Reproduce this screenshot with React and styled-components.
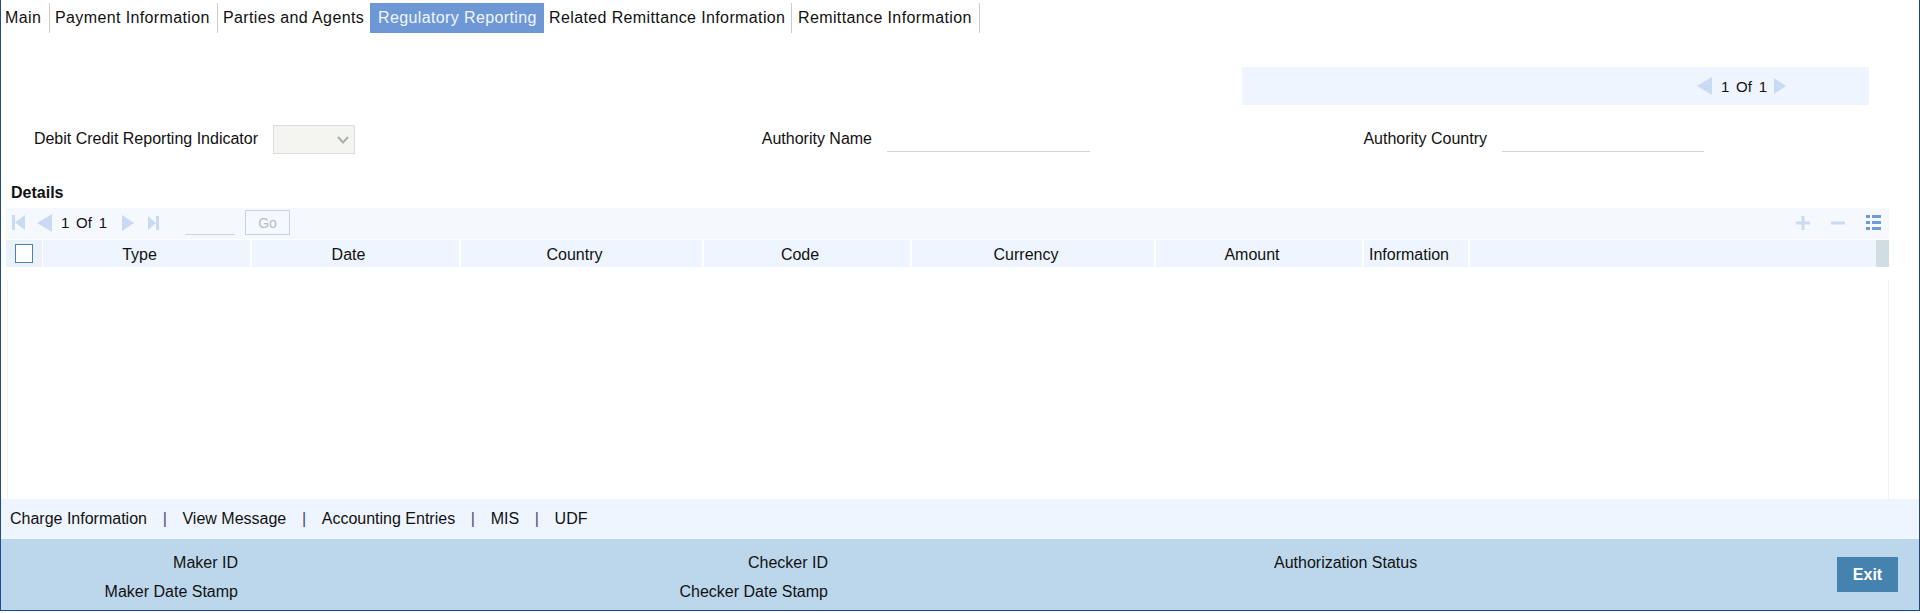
import React from "react";
import styled, { createGlobalStyle } from "styled-components";

const GlobalStyle = createGlobalStyle`
  html, body {
    margin: 0;
    padding: 0;
    background: #fff;
  }
  body {
    font-family: "Liberation Sans", Arial, sans-serif;
    font-size: 16px;
    color: #111;
  }
`;

const Frame = styled("div")`
  box-sizing: border-box;
  width: 1920px;
  height: 611px;
  display: flex;
  flex-direction: column;
  border-left: 1px solid #1f4a8c;
  border-right: 1px solid #1f4a6c;
  border-bottom: 1px solid #1f4a8c;
`;

const TabBar = styled("div")`
  display: flex;
  height: 30px;
  margin-top: 3px;
`;

const Tab = styled("div")`
  box-sizing: border-box;
  width: ${(props) => props.$width}px;
  display: flex;
  align-items: center;
  padding-left: ${(props) => props.$pad}px;
  letter-spacing: 0.38px;
  white-space: nowrap;
  color: ${(props) => (props.$active ? "#f2f6fc" : "#111")};
  background: ${(props) => (props.$active ? "#6d98d5" : "transparent")};
  border-right: ${(props) => (props.$line ? "1px solid #ccc" : "none")};
`;

const PagerBox = styled("div")`
  display: flex;
  align-items: center;
  width: 627px;
  height: 38px;
  margin: 34px 0 0 1241px;
  padding-left: 455px;
  box-sizing: border-box;
  background: #eef5fe;
`;

const PagerText = styled("span")`
  font-size: 15px;
  word-spacing: 2.6px;
  margin: ${(props) => props.$margin};
  white-space: nowrap;
`;

const FormRow = styled("div")`
  display: flex;
  height: 29px;
  margin-top: 20px;
`;

const FieldLabel = styled("label")`
  width: ${(props) => props.$width}px;
  margin-right: 15px;
  text-align: right;
  line-height: 27px;
  white-space: nowrap;
`;

const SelectBox = styled("div")`
  box-sizing: border-box;
  width: 82px;
  height: 29px;
  display: flex;
  align-items: center;
  justify-content: flex-end;
  padding-right: 5px;
  background: #f4f4f1;
  border: 1px solid #dcdcdc;
`;

const UnderlineInput = styled("div")`
  box-sizing: border-box;
  width: ${(props) => props.$width}px;
  height: ${(props) => props.$height}px;
  border-bottom: 1px solid #d4d4d4;
  margin-left: ${(props) => props.$left || 0}px;
`;

const SectionTitle = styled("div")`
  margin: 30px 0 0 10px;
  height: 24px;
  line-height: 18px;
  font-weight: bold;
`;

const Toolbar = styled("div")`
  display: flex;
  align-items: center;
  box-sizing: border-box;
  height: 31px;
  margin: 0 30px 0 5px;
  padding: 0 0 2px 6px;
  background: #f5f9fe;
`;

const ToolIcon = styled("svg")`
  display: block;
  flex: none;
  margin-left: ${(props) => props.$left || 0}px;
`;

const GoButton = styled("div")`
  box-sizing: border-box;
  width: 45px;
  height: 25px;
  margin-left: 10px;
  border: 1px solid #c9d3de;
  color: #b8bcc2;
  font-size: 14px;
  line-height: 25px;
  text-align: center;
`;

const ToolActions = styled("div")`
  display: flex;
  align-items: center;
  margin-left: auto;
  padding-right: 8px;
`;

const HeaderRow = styled("div")`
  display: flex;
  height: 27px;
  margin: 1px 30px 0 5px;
  background: #eef5fe;
`;

const CheckCell = styled("div")`
  box-sizing: border-box;
  width: 37px;
  display: flex;
  align-items: center;
  padding-left: 9px;
  background: #ebf1f8;
  border-right: 1px solid #fff;
`;

const CheckBox = styled("div")`
  box-sizing: border-box;
  width: 18px;
  height: 19px;
  background: #fff;
  border: 1px solid #4a82ae;
`;

const HeadCell = styled("div")`
  box-sizing: border-box;
  width: ${(props) => props.$width}px;
  padding: 1px 14px 0 0;
  line-height: 27px;
  text-align: center;
  white-space: nowrap;
  border-right: 2px solid #fff;
`;

const HeadFill = styled("div")`
  flex: 1;
`;

const ScrollCell = styled("div")`
  width: 13px;
  background: #d0dde2;
`;

const GridBody = styled("div")`
  flex: 1;
  margin: 13px 30px 0 6px;
  border-left: 1px solid #f1f1f1;
  border-right: 1px solid #f1f1f1;
`;

const LinkStrip = styled("div")`
  display: flex;
  align-items: center;
  height: 40px;
  padding-left: 9px;
  background: #eef5fe;
`;

const LinkItem = styled("span")`
  white-space: nowrap;
`;

const LinkDivider = styled("span")`
  width: 35.5px;
  text-align: center;
  color: #4a4a70;
`;

const Footer = styled("div")`
  display: flex;
  height: 71px;
  background: #bcd7ec;
`;

const AuditColumn = styled("div")`
  width: ${(props) => props.$width}px;
  display: grid;
  grid-auto-rows: 29px;
  padding-top: 15px;
  text-align: ${(props) => props.$align || "right"};
  margin-left: ${(props) => props.$left || 0}px;
  white-space: nowrap;
`;

const ExitButton = styled("button")`
  width: 61px;
  height: 35px;
  margin: 18px 21px 0 auto;
  border: none;
  padding: 0;
  background: #4682ae;
  color: #fff;
  font-family: inherit;
  font-size: 16px;
  font-weight: bold;
`;

const tabs = [
  { label: "Main", width: 49, pad: 4, line: true },
  { label: "Payment Information", width: 168, pad: 5, line: true },
  { label: "Parties and Agents", width: 152, pad: 5 },
  { label: "Regulatory Reporting", width: 174, pad: 8, active: true },
  { label: "Related Remittance Information", width: 248, pad: 5, line: true },
  { label: "Remittance Information", width: 188, pad: 6, line: true },
];

const columns = [
  { label: "Type", width: 209 },
  { label: "Date", width: 209 },
  { label: "Country", width: 243 },
  { label: "Code", width: 208 },
  { label: "Currency", width: 244 },
  { label: "Amount", width: 208 },
  { label: "Information", width: 106 },
];

const links = ["Charge Information", "View Message", "Accounting Entries", "MIS", "UDF"];

const DISABLED = "#c9daf2";

const TriLeft = ({ w = 15, h = 18, left }) => (
  <ToolIcon $left={left} width={w} height={h} viewBox="0 0 15 18">
    <polygon points="15,0 15,18 0,9" fill={DISABLED} />
  </ToolIcon>
);

const TriRight = ({ w = 12, h = 16, left }) => (
  <ToolIcon $left={left} width={w} height={h} viewBox="0 0 12 16">
    <polygon points="0,0 0,16 12,8" fill={DISABLED} />
  </ToolIcon>
);

const FirstIcon = () => (
  <ToolIcon width={13} height={15} viewBox="0 0 13 15">
    <rect x="0" y="0" width="3" height="15" fill={DISABLED} />
    <polygon points="13,0 13,15 3,7.5" fill={DISABLED} />
  </ToolIcon>
);

const LastIcon = ({ left }) => (
  <ToolIcon $left={left} width={11} height={14} viewBox="0 0 11 14">
    <polygon points="0,0 0,14 8,7" fill={DISABLED} />
    <rect x="8" y="0" width="3" height="14" fill={DISABLED} />
  </ToolIcon>
);

const PlusIcon = () => (
  <ToolIcon width={14} height={14} viewBox="0 0 14 14">
    <rect x="0" y="5.5" width="14" height="3" fill={DISABLED} />
    <rect x="5.5" y="0" width="3" height="14" fill={DISABLED} />
  </ToolIcon>
);

const MinusIcon = ({ left }) => (
  <ToolIcon $left={left} width={14} height={14} viewBox="0 0 14 14">
    <rect x="0" y="5.5" width="14" height="3" fill={DISABLED} />
  </ToolIcon>
);

const ListIcon = ({ left }) => (
  <ToolIcon $left={left} width={15} height={15} viewBox="0 0 15 15">
    <g fill="#6f9bd8">
      <rect x="0" y="0" width="4" height="3" />
      <rect x="6" y="0" width="9" height="3" />
      <rect x="0" y="6" width="4" height="3" />
      <rect x="6" y="6" width="9" height="3" />
      <rect x="0" y="12" width="4" height="3" />
      <rect x="6" y="12" width="9" height="3" />
    </g>
  </ToolIcon>
);

const Chevron = () => (
  <svg width="12" height="8" viewBox="0 0 12 8">
    <polyline points="1,1 6,6.5 11,1" fill="none" stroke="#a9aeaf" strokeWidth="2" />
  </svg>
);

const App = () => (
  <>
    <GlobalStyle />
    <Frame>
      <TabBar>
        {tabs.map((tab) => (
          <Tab
            key={tab.label}
            $width={tab.width}
            $pad={tab.pad}
            $line={tab.line}
            $active={tab.active}
          >
            {tab.label}
          </Tab>
        ))}
      </TabBar>

      <PagerBox>
        <TriLeft />
        <PagerText $margin="0 7px 0 9px">1 Of 1</PagerText>
        <TriRight />
      </PagerBox>

      <FormRow>
        <FieldLabel $width={257}>Debit Credit Reporting Indicator</FieldLabel>
        <SelectBox>
          <Chevron />
        </SelectBox>
        <FieldLabel $width={517}>Authority Name</FieldLabel>
        <UnderlineInput $width={203} $height={27} />
        <FieldLabel $width={397}>Authority Country</FieldLabel>
        <UnderlineInput $width={202} $height={27} />
      </FormRow>

      <SectionTitle>Details</SectionTitle>

      <Toolbar>
        <FirstIcon />
        <TriLeft left={12} />
        <PagerText $margin="0 15px 0 9px">1 Of 1</PagerText>
        <TriRight />
        <LastIcon left={14} />
        <UnderlineInput $width={50} $height={25} $left={26} />
        <GoButton>Go</GoButton>
        <ToolActions>
          <PlusIcon />
          <MinusIcon left={21} />
          <ListIcon left={21} />
        </ToolActions>
      </Toolbar>

      <HeaderRow>
        <CheckCell>
          <CheckBox />
        </CheckCell>
        {columns.map((col) => (
          <HeadCell key={col.label} $width={col.width}>
            {col.label}
          </HeadCell>
        ))}
        <HeadFill />
        <ScrollCell />
      </HeaderRow>

      <GridBody />

      <LinkStrip>
        {links.map((link, i) => (
          <React.Fragment key={link}>
            {i > 0 && <LinkDivider>|</LinkDivider>}
            <LinkItem>{link}</LinkItem>
          </React.Fragment>
        ))}
      </LinkStrip>

      <Footer>
        <AuditColumn $width={237}>
          <span>Maker ID</span>
          <span>Maker Date Stamp</span>
        </AuditColumn>
        <AuditColumn $width={590}>
          <span>Checker ID</span>
          <span>Checker Date Stamp</span>
        </AuditColumn>
        <AuditColumn $width={200} $align="left" $left={446}>
          <span>Authorization Status</span>
        </AuditColumn>
        <ExitButton>Exit</ExitButton>
      </Footer>
    </Frame>
  </>
);

export default App;
